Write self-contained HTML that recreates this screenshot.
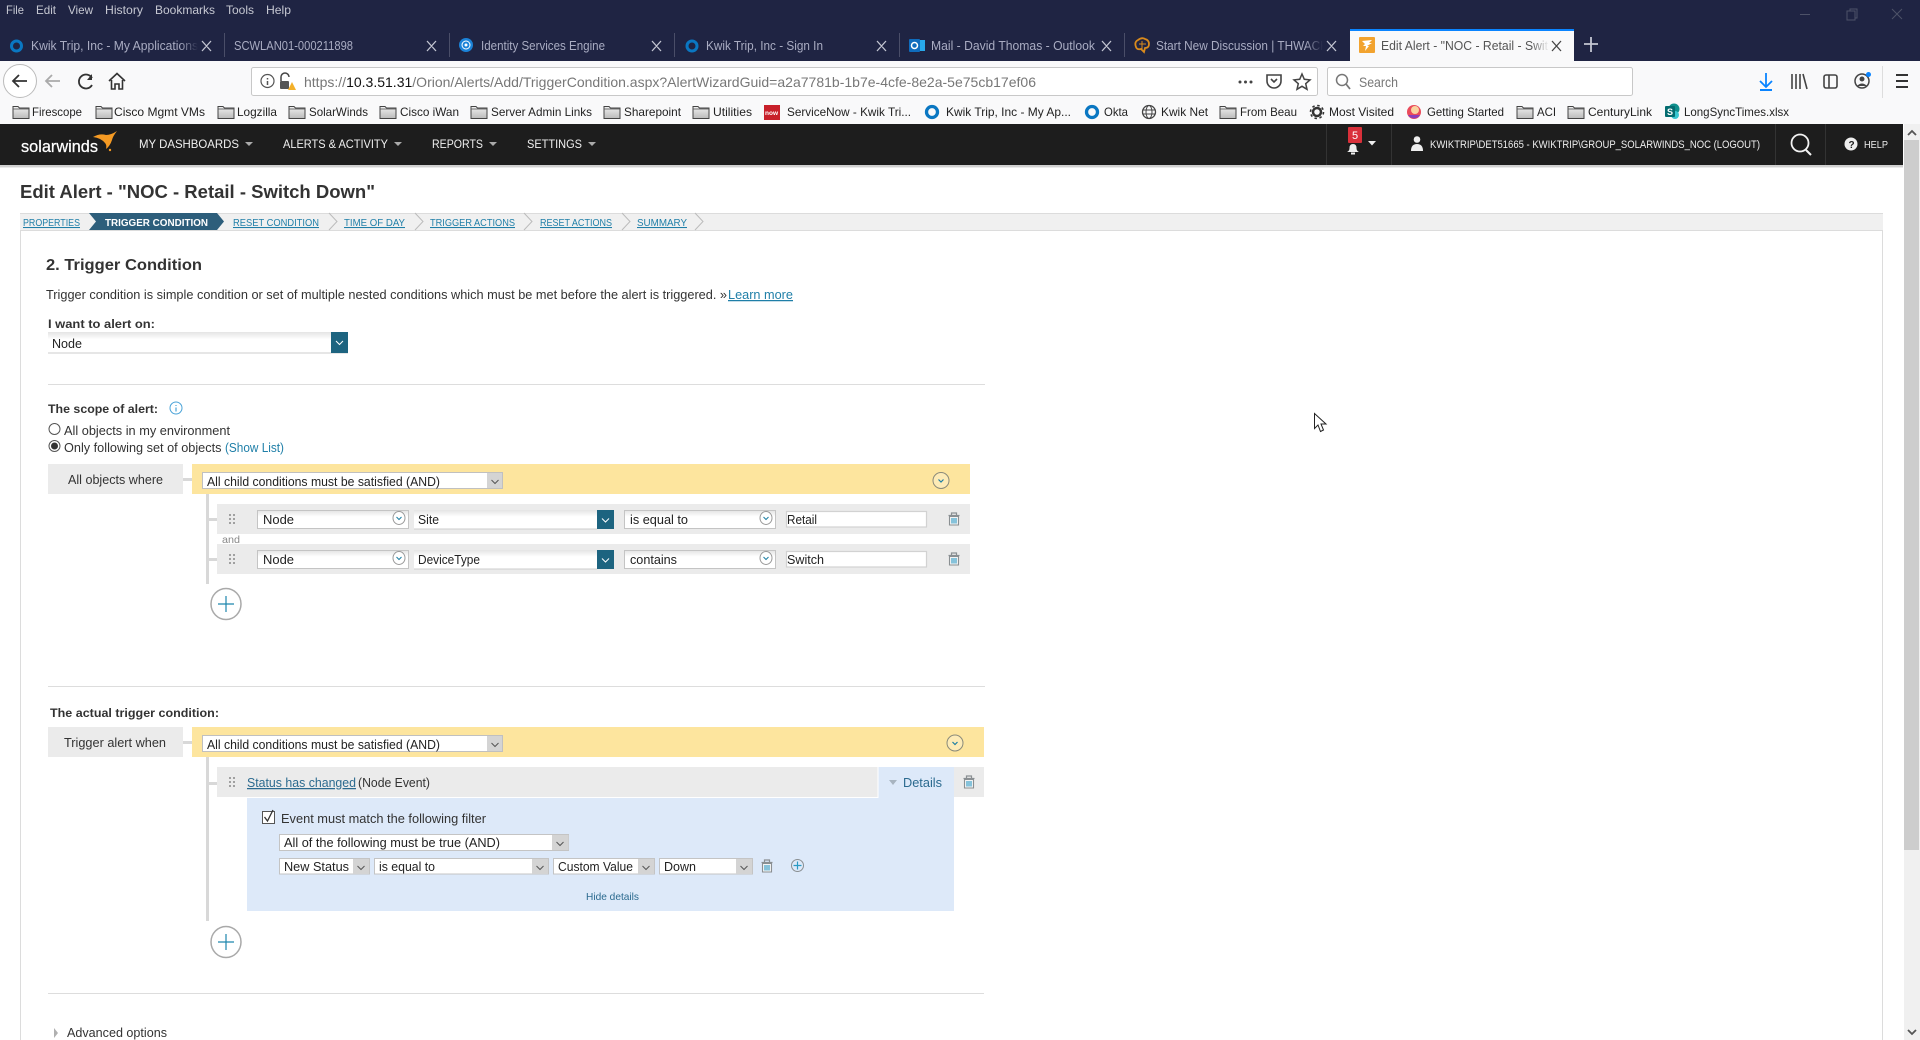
<!DOCTYPE html>
<html><head><meta charset="utf-8"><title>Edit Alert</title>
<style>
html,body{margin:0;padding:0;background:#fff;overflow:hidden;width:1920px;height:1040px}
svg{display:block}
text{font-family:"Liberation Sans",sans-serif;white-space:pre}
.m{font-size:12px;fill:#c6c8d2}
.t{font-size:12.5px;fill:#a9acc2}
.b{font-size:12px;fill:#222}
.n{font-size:12px;fill:#f0f0f0}
.d{font-size:12.5px;fill:#333}
.dk{font-size:12.5px;fill:#222}
.h{font-weight:bold;fill:#333}
.s{font-size:10.5px;fill:#1f7fa8;text-decoration:underline}
</style></head><body>
<svg width="1920" height="1040" viewBox="0 0 1920 1040" xmlns="http://www.w3.org/2000/svg">
<defs>
<linearGradient id="sel" x1="0" y1="0" x2="0" y2="1"><stop offset="0" stop-color="#e4e4e4"/><stop offset=".35" stop-color="#fff"/></linearGradient>
<linearGradient id="fold" x1="0" y1="0" x2="0" y2="1"><stop offset="0" stop-color="#f0f0f0"/><stop offset="1" stop-color="#bbb"/></linearGradient>
<linearGradient id="fd" x1="0" y1="0" x2="1" y2="0"><stop offset="0" stop-color="#1f2443" stop-opacity="0"/><stop offset="1" stop-color="#1f2443"/></linearGradient>
<linearGradient id="fl" x1="0" y1="0" x2="1" y2="0"><stop offset="0" stop-color="#f9f9fa" stop-opacity="0"/><stop offset="1" stop-color="#f9f9fa"/></linearGradient>
<g id="folder"><path d="M-8 -5.500 h5 l1.500 1.500 h9.500 v10.500 h-16 z" fill="url(#fold)" stroke="#444" stroke-width="1"/><path d="M-8 -3 h16" stroke="#555" stroke-width=".8"/></g>
<g id="trash" fill="none" stroke="#8a8f92" stroke-width="1.100"><path d="M-2.500 -4 v-2 h5 v2 M-5.500 -3.500 h11" stroke-width="1.200"/><path d="M-4.500 -2.500 h9 v8.500 h-9 z" fill="#f4f4f4"/><path d="M-2 -1 v5.500 M0 -1 v5.500 M2 -1 v5.500" stroke-width="1.100" stroke="#2b9ac4"/></g>
<g id="dots" fill="#a0a0a0"><rect x="-3" y="-5" width="2" height="2"/><rect x="1" y="-5" width="2" height="2"/><rect x="-3" y="-1" width="2" height="2"/><rect x="1" y="-1" width="2" height="2"/><rect x="-3" y="3" width="2" height="2"/><rect x="1" y="3" width="2" height="2"/></g>
<g id="circ"><circle r="8" cx="0" cy="0" fill="#fff" fill-opacity=".25" stroke="#8a8a7a" stroke-width="1"/><path d="M-2.500 -1 L0 1.500 L2.500 -1" fill="none" stroke="#1d7fa3" stroke-width="1.200"/></g>
<g id="addc"><ellipse rx="15" ry="15.500" fill="#fff" stroke="#a9a9a9" stroke-width="1.500"/><path d="M-8 0 H8 M0 -8 V8" stroke="#1d86ad" stroke-width="1.200"/></g>
<g id="okta"><circle r="5" fill="none" stroke="#0a77c2" stroke-width="3"/></g>
<path id="chv" d="M-3.500 -2 L0 1.500 L3.500 -2" fill="none" stroke="#555" stroke-width="1"/>
</defs>

<!-- window chrome -->
<rect width="1920" height="61" fill="#1f2443"/>
<text class="m" x="6" y="14" textLength="18" lengthAdjust="spacingAndGlyphs">File</text>
<text class="m" x="36" y="14" textLength="20" lengthAdjust="spacingAndGlyphs">Edit</text>
<text class="m" x="68" y="14" textLength="25" lengthAdjust="spacingAndGlyphs">View</text>
<text class="m" x="105" y="14" textLength="38" lengthAdjust="spacingAndGlyphs">History</text>
<text class="m" x="155" y="14" textLength="60" lengthAdjust="spacingAndGlyphs">Bookmarks</text>
<text class="m" x="226" y="14" textLength="28" lengthAdjust="spacingAndGlyphs">Tools</text>
<text class="m" x="266" y="14" textLength="25" lengthAdjust="spacingAndGlyphs">Help</text>
<g stroke="#4d5268" fill="none" stroke-width="1"><path d="M1800 14.500 h10"/><path d="M1847 11 h8 v9 h-8 z M1850 11 v-2 h7 v9 h-2"/><path d="M1892 9 l10 10 M1902 9 l-10 10"/></g>

<!-- tabs -->
<g stroke="#4a4e68" stroke-width="1"><path d="M224.500 33 V57 M449.500 33 V57 M674.500 33 V57 M899.500 33 V57 M1124.500 33 V57"/></g>
<use href="#okta" x="16.500" y="46"/>
<text class="t" x="31" y="50" textLength="167" lengthAdjust="spacingAndGlyphs">Kwik Trip, Inc - My Applications</text>
<rect x="180" y="38" width="18" height="18" fill="url(#fd)"/>
<text class="t" x="234" y="50" textLength="119" lengthAdjust="spacingAndGlyphs">SCWLAN01-000211898</text>
<circle cx="466" cy="45" r="7" fill="#1b82d8"/><circle cx="466" cy="45" r="4" fill="none" stroke="#fff" stroke-width="1"/><circle cx="466" cy="45" r="1.500" fill="#fff"/>
<text class="t" x="481" y="50" textLength="124" lengthAdjust="spacingAndGlyphs">Identity Services Engine</text>
<use href="#okta" x="692" y="46"/>
<text class="t" x="706" y="50" textLength="117" lengthAdjust="spacingAndGlyphs">Kwik Trip, Inc - Sign In</text>
<path d="M914 40 H925 V51 H914 z" fill="#28a8ea"/><rect x="909" y="39" width="11" height="13" rx="1" fill="#0f6cbd"/><circle cx="914.500" cy="45.500" r="3" fill="none" stroke="#fff" stroke-width="1.500"/>
<text class="t" x="931" y="50" textLength="164" lengthAdjust="spacingAndGlyphs">Mail - David Thomas - Outlook</text>
<path d="M1136 47 q-2 -5 2 -7 q4 -3 7 -1 q4 1 4 5 q0 4 -4 4 l-1 4 l-3 -3 q-4 1 -5 -2 z" fill="none" stroke="#d98a1c" stroke-width="1.800"/><path d="M1139 44 h7 M1142 41 v8" stroke="#d98a1c"/>
<text class="t" x="1156" y="50" textLength="172" lengthAdjust="spacingAndGlyphs">Start New Discussion | THWACK</text>
<rect x="1305" y="38" width="18" height="18" fill="url(#fd)"/><rect x="1323" y="38" width="7" height="18" fill="#1f2443"/>
<rect x="1350" y="29" width="224" height="32" fill="#f9f9fa"/><rect x="1350" y="29" width="224" height="2" fill="#0a84ff"/>
<rect x="1359" y="37" width="16" height="16" rx="1" fill="#f2a32f"/><path d="M1362 41 l10 -1 l-3 3 l3 0 l-5 3 l2 0 l-4 5 l1 -5 l-3 0 l2 -2 z" fill="#fff"/>
<text x="1381" y="50" font-size="12.500" fill="#555" textLength="167" lengthAdjust="spacingAndGlyphs">Edit Alert - "NOC - Retail - Swit</text>
<rect x="1532" y="38" width="17" height="18" fill="url(#fl)"/>
<g stroke="#c4c6d2" stroke-width="1.300" fill="none">
<path d="M202 41 l9 10 M211 41 l-9 10 M427 41 l9 10 M436 41 l-9 10 M652 41 l9 10 M661 41 l-9 10 M877 41 l9 10 M886 41 l-9 10 M1102 41 l9 10 M1111 41 l-9 10 M1327 41 l9 10 M1336 41 l-9 10"/>
<path d="M1584 44 h14 M1591 37 v15" stroke-width="1.800"/></g>
<path d="M1552 41 l9 10 M1561 41 l-9 10" stroke="#444" stroke-width="1.300"/>

<!-- toolbar -->
<rect y="61" width="1920" height="63" fill="#f9f9fa"/>
<circle cx="20" cy="81" r="16.500" fill="#fff" stroke="#bbb"/>
<path d="M27 81 H13 M19 75 L13 81 L19 87" fill="none" stroke="#333" stroke-width="1.800"/>
<path d="M60 81 H46 M52 75 L46 81 L52 87" fill="none" stroke="#aaa" stroke-width="1.800"/>
<path d="M92 78 A7 7 0 1 0 92 85" fill="none" stroke="#333" stroke-width="1.800"/><path d="M92 74 V80 H87 z" fill="#333"/>
<path d="M109 81 L117 73.500 L125 81 M111.500 80 V89 H115 V84 H119 V89 H122.500 V80" fill="none" stroke="#333" stroke-width="1.600"/>
<rect x="251.500" y="67.500" width="1066" height="28" rx="2" fill="#fff" stroke="#c8c8c8"/>
<circle cx="267.500" cy="81" r="6.500" fill="none" stroke="#555" stroke-width="1.200"/><path d="M267.500 78 v1.500 M267.500 81 v4" stroke="#555" stroke-width="1.500"/>
<path d="M281 81 v-4 a4 4 0 0 1 8 0" fill="none" stroke="#444" stroke-width="1.500"/><rect x="280" y="81" width="9" height="8" rx="1" fill="#555"/><path d="M288 90 L292 82 L296 90 z" fill="#f3b02a"/>
<text x="304" y="87" font-size="14" fill="#777" textLength="732" lengthAdjust="spacingAndGlyphs">https://<tspan fill="#111">10.3.51.31</tspan>/Orion/Alerts/Add/TriggerCondition.aspx?AlertWizardGuid=a2a7781b-1b7e-4cfe-8e2a-5e75cb17ef06</text>
<g fill="#444"><circle cx="1240" cy="82" r="1.500"/><circle cx="1245.500" cy="82" r="1.500"/><circle cx="1251" cy="82" r="1.500"/></g>
<path d="M1267 75 h14 v6 a7 7 0 0 1 -14 0 z" fill="none" stroke="#444" stroke-width="1.600"/><path d="M1271 79 l3 3 l3 -3" fill="none" stroke="#444" stroke-width="1.600"/>
<path d="M1302 74 l2.300 5.300 l5.700 .6 l-4.300 3.800 l1.300 5.600 l-5 -3 l-5 3 l1.300 -5.600 l-4.300 -3.800 l5.700 -.6 z" fill="none" stroke="#444" stroke-width="1.500"/>
<rect x="1327.500" y="67.500" width="305" height="28" rx="2" fill="#fff" stroke="#c8c8c8"/>
<circle cx="1342" cy="80" r="5.500" fill="none" stroke="#777" stroke-width="1.500"/><path d="M1346 84 L1350 89" stroke="#777" stroke-width="1.800"/>
<text x="1359" y="87" font-size="14" fill="#777" textLength="39" lengthAdjust="spacingAndGlyphs">Search</text>
<path d="M1766 73 V86 M1760 81 L1766 87 L1772 81" fill="none" stroke="#0a84ff" stroke-width="1.800"/><path d="M1760 90 H1772" stroke="#0a84ff" stroke-width="2"/>
<path d="M1792 74 V89 M1796 74 V89 M1800 74 V89 M1803 74 L1807 89" fill="none" stroke="#444" stroke-width="1.600"/>
<rect x="1824" y="75" width="13" height="13" rx="2" fill="none" stroke="#444" stroke-width="1.600"/><path d="M1829 75 V88" stroke="#444" stroke-width="1.600"/>
<circle cx="1862" cy="81" r="7" fill="none" stroke="#444" stroke-width="1.500"/><circle cx="1862" cy="79" r="2.500" fill="#444"/><path d="M1857 86 q5 -5 10 0" fill="#444"/><circle cx="1868.500" cy="74.500" r="2.500" fill="#0a84ff"/>
<path d="M1882.500 66 V98" stroke="#ddd"/>
<path d="M1896 75 H1908 M1896 81 H1908 M1896 87 H1908" stroke="#333" stroke-width="2"/>

<!-- bookmarks -->
<use href="#folder" x="21" y="112"/><text class="b" x="32" y="116" textLength="50" lengthAdjust="spacingAndGlyphs">Firescope</text>
<use href="#folder" x="104" y="112"/><text class="b" x="114" y="116" textLength="91" lengthAdjust="spacingAndGlyphs">Cisco Mgmt VMs</text>
<use href="#folder" x="226" y="112"/><text class="b" x="237" y="116" textLength="40" lengthAdjust="spacingAndGlyphs">Logzilla</text>
<use href="#folder" x="297" y="112"/><text class="b" x="309" y="116" textLength="59" lengthAdjust="spacingAndGlyphs">SolarWinds</text>
<use href="#folder" x="388" y="112"/><text class="b" x="400" y="116" textLength="59" lengthAdjust="spacingAndGlyphs">Cisco iWan</text>
<use href="#folder" x="479" y="112"/><text class="b" x="491" y="116" textLength="101" lengthAdjust="spacingAndGlyphs">Server Admin Links</text>
<use href="#folder" x="612" y="112"/><text class="b" x="624" y="116" textLength="57" lengthAdjust="spacingAndGlyphs">Sharepoint</text>
<use href="#folder" x="701" y="112"/><text class="b" x="713" y="116" textLength="39" lengthAdjust="spacingAndGlyphs">Utilities</text>
<rect x="764" y="105" width="16" height="15" fill="#c8202a"/><text x="765" y="115" font-size="6.500" font-weight="bold" fill="#fff">now</text>
<text class="b" x="787" y="116" textLength="124" lengthAdjust="spacingAndGlyphs">ServiceNow - Kwik Tri...</text>
<use href="#okta" transform="translate(932,112) scale(1.1)"/><text class="b" x="946" y="116" textLength="125" lengthAdjust="spacingAndGlyphs">Kwik Trip, Inc - My Ap...</text>
<use href="#okta" transform="translate(1092,112) scale(1.1)"/><text class="b" x="1104" y="116" textLength="24" lengthAdjust="spacingAndGlyphs">Okta</text>
<circle cx="1149" cy="112" r="6.500" fill="none" stroke="#444" stroke-width="1.300"/><ellipse cx="1149" cy="112" rx="3" ry="6.500" fill="none" stroke="#444"/><path d="M1143 110 h12 M1143 114 h12" stroke="#444"/>
<text class="b" x="1161" y="116" textLength="47" lengthAdjust="spacingAndGlyphs">Kwik Net</text>
<use href="#folder" x="1228" y="112"/><text class="b" x="1240" y="116" textLength="57" lengthAdjust="spacingAndGlyphs">From Beau</text>
<circle cx="1317" cy="112" r="4" fill="none" stroke="#333" stroke-width="2.500"/><circle cx="1317" cy="112" r="6.500" fill="none" stroke="#333" stroke-width="1.600" stroke-dasharray="2.500 2.600"/>
<text class="b" x="1329" y="116" textLength="65" lengthAdjust="spacingAndGlyphs">Most Visited</text>
<circle cx="1414" cy="112" r="7" fill="#ea4a5a"/><circle cx="1415" cy="110" r="4" fill="#f9d3a0"/><path d="M1408 115 a7 7 0 0 0 12 0" fill="#8a3dbb"/>
<text class="b" x="1427" y="116" textLength="77" lengthAdjust="spacingAndGlyphs">Getting Started</text>
<use href="#folder" x="1525" y="112"/><text class="b" x="1537" y="116" textLength="19" lengthAdjust="spacingAndGlyphs">ACI</text>
<use href="#folder" x="1576" y="112"/><text class="b" x="1588" y="116" textLength="64" lengthAdjust="spacingAndGlyphs">CenturyLink</text>
<circle cx="1674" cy="109" r="5.500" fill="#0f8f8c"/><circle cx="1675" cy="115" r="4" fill="#37c6d0"/><rect x="1665" y="106" width="10" height="11" rx="1" fill="#036c70"/><text x="1667" y="115" font-size="9" font-weight="bold" fill="#fff">S</text>
<text class="b" x="1684" y="116" textLength="105" lengthAdjust="spacingAndGlyphs">LongSyncTimes.xlsx</text>

<!-- page -->
<rect x="0" y="124" width="1904" height="916" fill="#fff"/>
<!-- scrollbar -->
<rect x="1904" y="124" width="16" height="916" fill="#f0f0f0"/><rect x="1904" y="140" width="15" height="710" fill="#cdcdcd"/>
<path d="M1908 135 l4 -4 l4 4" fill="none" stroke="#555" stroke-width="1.800"/><path d="M1908 1030 l4 4 l4 -4" fill="none" stroke="#555" stroke-width="1.800"/>

<!-- nav -->
<rect y="156" width="1903" height="12" fill="#888" opacity=".18"/>
<rect y="165" width="1903" height="2" fill="#aaa" opacity=".4"/>
<rect y="124" width="1903" height="41" fill="#1d1d1d"/>
<text x="21" y="152" font-size="17" fill="#fff" stroke="#fff" stroke-width=".25" textLength="77" lengthAdjust="spacingAndGlyphs">solarwinds</text>
<path d="M117 131 Q113 136 112 140 Q110 146 106 149 Q107 145 105 143 Q101 138 93 137 Q100 133 106 135 Q111 135 117 131 z" fill="#f59a23"/><circle cx="110" cy="150" r="1.200" fill="#f59a23"/>
<text class="n" x="139" y="148" textLength="100" lengthAdjust="spacingAndGlyphs">MY DASHBOARDS</text><path d="M245 142 h8 l-4 4 z" fill="#aaa"/>
<text class="n" x="283" y="148" textLength="105" lengthAdjust="spacingAndGlyphs">ALERTS &amp; ACTIVITY</text><path d="M394 142 h8 l-4 4 z" fill="#aaa"/>
<text class="n" x="432" y="148" textLength="51" lengthAdjust="spacingAndGlyphs">REPORTS</text><path d="M489 142 h8 l-4 4 z" fill="#aaa"/>
<text class="n" x="527" y="148" textLength="55" lengthAdjust="spacingAndGlyphs">SETTINGS</text><path d="M588 142 h8 l-4 4 z" fill="#aaa"/>
<path d="M1326.500 124 V165 M1391.500 124 V165 M1775.500 124 V165 M1825.500 124 V165" stroke="#333"/>
<path d="M1347 152 q2.500 -1 2.500 -4 q0 -4 3.500 -4 q3.500 0 3.500 4 q0 3 2.500 4 z" fill="#eee"/><rect x="1351" y="152.500" width="4" height="2" fill="#eee"/>
<rect x="1348" y="127" width="14" height="16" rx="1" fill="#d9303a"/><text x="1352" y="139" font-size="11" fill="#fff">5</text>
<path d="M1368 141 h8 l-4 4.500 z" fill="#eee"/>
<circle cx="1417" cy="139.500" r="3.300" fill="#eee"/><path d="M1411 151 q0 -7 6 -7 q6 0 6 7 z" fill="#eee"/>
<text x="1430" y="148" font-size="11" fill="#eee" textLength="330" lengthAdjust="spacingAndGlyphs">KWIKTRIP\DET51665 - KWIKTRIP\GROUP_SOLARWINDS_NOC (LOGOUT)</text>
<circle cx="1800" cy="143" r="8.500" fill="none" stroke="#f2f2f2" stroke-width="1.800"/><path d="M1806 150 L1811 155" stroke="#f2f2f2" stroke-width="2"/>
<circle cx="1851" cy="144" r="6.500" fill="#eee"/><text x="1848.500" y="148" font-size="10" font-weight="bold" fill="#1d1d1d">?</text>
<text x="1864" y="148" font-size="10.500" fill="#eee" textLength="24" lengthAdjust="spacingAndGlyphs">HELP</text>

<!-- title -->
<text class="h" x="20" y="198" font-size="18" textLength="355" lengthAdjust="spacingAndGlyphs">Edit Alert - "NOC - Retail - Switch Down"</text>

<!-- breadcrumbs -->
<path d="M20.500 230 V1040 M1882.500 230 V1040" stroke="#dcdcdc"/>
<rect x="20" y="213" width="1863" height="17.500" fill="#f0f0f0"/>
<path d="M20 213.500 H1883 M20 230.500 H1883" stroke="#dcdcdc"/>
<text class="s" x="23" y="226" textLength="57" lengthAdjust="spacingAndGlyphs">PROPERTIES</text>
<path d="M89 213 H217 L224 221.500 L217 230 H89 L96 221.500 z" fill="#2d5e7b"/>
<text x="105" y="226" font-size="10.500" font-weight="bold" fill="#fff" textLength="103" lengthAdjust="spacingAndGlyphs">TRIGGER CONDITION</text>
<text class="s" x="233" y="226" textLength="86" lengthAdjust="spacingAndGlyphs">RESET CONDITION</text>
<text class="s" x="344" y="226" textLength="61" lengthAdjust="spacingAndGlyphs">TIME OF DAY</text>
<text class="s" x="430" y="226" textLength="85" lengthAdjust="spacingAndGlyphs">TRIGGER ACTIONS</text>
<text class="s" x="540" y="226" textLength="72" lengthAdjust="spacingAndGlyphs">RESET ACTIONS</text>
<text class="s" x="637" y="226" textLength="50" lengthAdjust="spacingAndGlyphs">SUMMARY</text>
<path d="M329 213 L337 221.500 L329 230 M415 213 L423 221.500 L415 230 M524 213 L532 221.500 L524 230 M622 213 L630 221.500 L622 230 M695 213 L703 221.500 L695 230" fill="none" stroke="#bbb"/>

<!-- heading -->
<text class="h" x="46" y="270" font-size="16" textLength="156" lengthAdjust="spacingAndGlyphs">2. Trigger Condition</text>
<text class="d" x="46" y="299" textLength="681" lengthAdjust="spacingAndGlyphs">Trigger condition is simple condition or set of multiple nested conditions which must be met before the alert is triggered. »</text>
<text x="728" y="299" font-size="12.500" fill="#1f7fa8" text-decoration="underline" textLength="65" lengthAdjust="spacingAndGlyphs">Learn more</text>
<text class="h" x="48" y="328" font-size="12" textLength="107" lengthAdjust="spacingAndGlyphs">I want to alert on:</text>
<rect x="48" y="332" width="283" height="21" fill="url(#sel)"/><path d="M48 353 H348" stroke="#ccc"/>
<rect x="331" y="332" width="17" height="21" fill="#1d6480"/><path d="M336 341 L339.500 344.500 L343 341" fill="none" stroke="#fff"/>
<text class="dk" x="52" y="348" textLength="30" lengthAdjust="spacingAndGlyphs">Node</text>

<path d="M48 384.500 H985" stroke="#ddd"/>

<!-- scope -->
<text class="h" x="48" y="413" font-size="12" textLength="110" lengthAdjust="spacingAndGlyphs">The scope of alert:</text>
<circle cx="176" cy="408" r="6" fill="#fff" stroke="#4aa3d8"/><path d="M176 405 v1 M176 407.500 v4" stroke="#4aa3d8" stroke-width="1.200"/>
<circle cx="54.500" cy="429" r="5.500" fill="#fff" stroke="#555"/>
<text class="d" x="64" y="435" textLength="166" lengthAdjust="spacingAndGlyphs">All objects in my environment</text>
<circle cx="54.500" cy="446" r="5.500" fill="#fff" stroke="#555"/><circle cx="54.500" cy="446" r="3.500" fill="#333"/>
<text class="d" x="64" y="452" textLength="161" lengthAdjust="spacingAndGlyphs">Only following set of objects </text>
<text x="225" y="452" font-size="12.500" fill="#1f7fa8" textLength="59" lengthAdjust="spacingAndGlyphs">(Show List)</text>

<rect x="48" y="464" width="135" height="30" fill="#ebebeb"/>
<text class="d" x="68" y="484" textLength="95" lengthAdjust="spacingAndGlyphs">All objects where</text>
<rect x="183" y="478" width="9" height="3" fill="#d8d8d8"/>
<rect x="192" y="464" width="778" height="30" fill="#fde59e"/>
<rect x="202" y="472" width="301" height="17" fill="#fff"/><rect x="487" y="472" width="16" height="17" fill="#d4d4d4"/><rect x="202.500" y="472.500" width="300" height="16" fill="none" stroke="#c0c0c0"/>
<use href="#chv" x="495" y="482"/>
<text class="dk" x="207" y="486" textLength="233" lengthAdjust="spacingAndGlyphs">All child conditions must be satisfied (AND)</text>
<use href="#circ" x="941" y="480.500"/>
<rect x="206" y="494" width="3" height="90" fill="#d8d8d8"/>
<rect x="208" y="518" width="9" height="3" fill="#d8d8d8"/><rect x="208" y="558" width="9" height="3" fill="#d8d8d8"/>
<rect x="217" y="504" width="753" height="30" fill="#ebebeb"/>
<rect x="217" y="544" width="753" height="30" fill="#ebebeb"/>
<text x="222" y="543" font-size="10.500" fill="#888" textLength="18" lengthAdjust="spacingAndGlyphs">and</text>
<use href="#dots" x="232" y="519"/><use href="#dots" x="232" y="559"/>
<!-- row 1 -->
<rect x="257.500" y="510.500" width="151" height="18" fill="url(#sel)" stroke="#c4c4c4"/>
<text class="dk" x="263" y="524" textLength="31" lengthAdjust="spacingAndGlyphs">Node</text>
<ellipse cx="399" cy="518" rx="6" ry="6.500" fill="#fff" stroke="#999"/><path d="M396.500 517 L399 519.500 L401.500 517" fill="none" stroke="#1d7fa3"/>
<rect x="414" y="510" width="183" height="19" fill="url(#sel)"/><path d="M414 529 H597" stroke="#ccc"/>
<rect x="597" y="510" width="17" height="19" fill="#1d6480"/><path d="M602 518.500 L605.500 522 L609 518.500" fill="none" stroke="#fff"/>
<text class="dk" x="418" y="524" textLength="21" lengthAdjust="spacingAndGlyphs">Site</text>
<rect x="624.500" y="510.500" width="151" height="18" fill="url(#sel)" stroke="#c4c4c4"/>
<text class="dk" x="630" y="524" textLength="58" lengthAdjust="spacingAndGlyphs">is equal to</text>
<ellipse cx="766" cy="518" rx="6" ry="6.500" fill="#fff" stroke="#999"/><path d="M763.500 517 L766 519.500 L768.500 517" fill="none" stroke="#1d7fa3"/>
<rect x="786.500" y="511.500" width="140" height="15.500" fill="#fff" stroke="#d2d2d2" stroke-width="1.200"/>
<text class="dk" x="787" y="524" textLength="30" lengthAdjust="spacingAndGlyphs">Retail</text>
<use href="#trash" x="954" y="519"/>
<!-- row 2 -->
<rect x="257.500" y="550.500" width="151" height="18" fill="url(#sel)" stroke="#c4c4c4"/>
<text class="dk" x="263" y="564" textLength="31" lengthAdjust="spacingAndGlyphs">Node</text>
<ellipse cx="399" cy="558" rx="6" ry="6.500" fill="#fff" stroke="#999"/><path d="M396.500 557 L399 559.500 L401.500 557" fill="none" stroke="#1d7fa3"/>
<rect x="414" y="550" width="183" height="19" fill="url(#sel)"/><path d="M414 569 H597" stroke="#ccc"/>
<rect x="597" y="550" width="17" height="19" fill="#1d6480"/><path d="M602 558.500 L605.500 562 L609 558.500" fill="none" stroke="#fff"/>
<text class="dk" x="418" y="564" textLength="62" lengthAdjust="spacingAndGlyphs">DeviceType</text>
<rect x="624.500" y="550.500" width="151" height="18" fill="url(#sel)" stroke="#c4c4c4"/>
<text class="dk" x="630" y="564" textLength="47" lengthAdjust="spacingAndGlyphs">contains</text>
<ellipse cx="766" cy="558" rx="6" ry="6.500" fill="#fff" stroke="#999"/><path d="M763.500 557 L766 559.500 L768.500 557" fill="none" stroke="#1d7fa3"/>
<rect x="786.500" y="551.500" width="140" height="15.500" fill="#fff" stroke="#d2d2d2" stroke-width="1.200"/>
<text class="dk" x="787" y="564" textLength="37" lengthAdjust="spacingAndGlyphs">Switch</text>
<use href="#trash" x="954" y="559"/>
<use href="#addc" x="226" y="604"/>

<path d="M48 686.500 H985" stroke="#ddd"/>

<!-- trigger -->
<text class="h" x="50" y="717" font-size="12" textLength="169" lengthAdjust="spacingAndGlyphs">The actual trigger condition:</text>
<rect x="48" y="727" width="135" height="30" fill="#ebebeb"/>
<text class="d" x="64" y="747" textLength="102" lengthAdjust="spacingAndGlyphs">Trigger alert when</text>
<rect x="183" y="741" width="9" height="3" fill="#d8d8d8"/>
<rect x="192" y="727" width="792" height="30" fill="#fde59e"/>
<rect x="202" y="735" width="301" height="17" fill="#fff"/><rect x="487" y="735" width="16" height="17" fill="#d4d4d4"/><rect x="202.500" y="735.500" width="300" height="16" fill="none" stroke="#c0c0c0"/>
<use href="#chv" x="495" y="745"/>
<text class="dk" x="207" y="749" textLength="233" lengthAdjust="spacingAndGlyphs">All child conditions must be satisfied (AND)</text>
<use href="#circ" x="955" y="743"/>
<rect x="206" y="757" width="3" height="164" fill="#d8d8d8"/>
<rect x="208" y="782" width="9" height="3" fill="#d8d8d8"/>
<rect x="217" y="767" width="661" height="30" fill="#ebebeb"/>
<rect x="878" y="767" width="76" height="31" fill="#dde9f9"/>
<rect x="954" y="767" width="30" height="30" fill="#ebebeb"/>
<rect x="247" y="798" width="707" height="113" fill="#dde9f9"/>
<path d="M247 797.500 H878 M878 767 V798" stroke="#fff"/>
<use href="#dots" x="232" y="782"/>
<text x="247" y="787" font-size="12.500" fill="#2b6a8f" text-decoration="underline" textLength="109" lengthAdjust="spacingAndGlyphs">Status has changed</text>
<text class="d" x="358" y="787" textLength="72" lengthAdjust="spacingAndGlyphs">(Node Event)</text>
<path d="M889 780 h8 l-4 5 z" fill="#a8b4c0"/>
<text x="903" y="787" font-size="12.500" fill="#2b6a8f" textLength="39" lengthAdjust="spacingAndGlyphs">Details</text>
<use href="#trash" x="969" y="782"/>
<rect x="262.500" y="811.500" width="12" height="12" fill="#fff" stroke="#555"/><path d="M264.500 817 L267.500 821 L273 810" fill="none" stroke="#333" stroke-width="1.300"/>
<text class="d" x="281" y="823" textLength="205" lengthAdjust="spacingAndGlyphs">Event must match the following filter</text>
<rect x="279.500" y="834.500" width="289" height="16" fill="#fff" stroke="#c4c4c4"/><rect x="552" y="835" width="16.500" height="15" fill="#d4d4d4"/><use href="#chv" x="560" y="844"/>
<text class="dk" x="284" y="847" textLength="216" lengthAdjust="spacingAndGlyphs">All of the following must be true (AND)</text>
<rect x="279.500" y="858.500" width="90" height="15.500" fill="#fff" stroke="#c4c4c4"/><rect x="353" y="859" width="16" height="15" fill="#d4d4d4"/><use href="#chv" x="361" y="868"/>
<text class="dk" x="284" y="871" textLength="65" lengthAdjust="spacingAndGlyphs">New Status</text>
<rect x="374.500" y="858.500" width="174" height="15.500" fill="#fff" stroke="#c4c4c4"/><rect x="532" y="859" width="16" height="15" fill="#d4d4d4"/><use href="#chv" x="540" y="868"/>
<text class="dk" x="379" y="871" textLength="56" lengthAdjust="spacingAndGlyphs">is equal to</text>
<rect x="553.500" y="858.500" width="101" height="15.500" fill="#fff" stroke="#c4c4c4"/><rect x="638" y="859" width="16" height="15" fill="#d4d4d4"/><use href="#chv" x="646" y="868"/>
<text class="dk" x="558" y="871" textLength="75" lengthAdjust="spacingAndGlyphs">Custom Value</text>
<rect x="659.500" y="858.500" width="93" height="15.500" fill="#fff" stroke="#c4c4c4"/><rect x="736" y="859" width="16" height="15" fill="#d4d4d4"/><use href="#chv" x="744" y="868"/>
<text class="dk" x="664" y="871" textLength="32" lengthAdjust="spacingAndGlyphs">Down</text>
<use href="#trash" x="767" y="866"/>
<circle cx="797.500" cy="865.500" r="6" fill="none" stroke="#8a8f92"/><path d="M793.500 865.500 h8 M797.500 861.500 v8" stroke="#2b9ac4" stroke-width="1.200"/>
<text x="586" y="900" font-size="10.500" fill="#2b6a8f" textLength="53" lengthAdjust="spacingAndGlyphs">Hide details</text>
<use href="#addc" x="226" y="942"/>

<path d="M48 993.500 H984" stroke="#ddd"/>
<path d="M54 1028 l4 5 l-4 5 z" fill="#b0b0b0"/>
<text class="d" x="67" y="1037" textLength="100" lengthAdjust="spacingAndGlyphs">Advanced options</text>

<!-- cursor -->
<path d="M1314.500 413.500 V428.500 L1318 425 L1320.500 431.500 L1323.500 430 L1321 424 L1326 424 z" fill="#fff" stroke="#222" stroke-width="1"/>
</svg>
</body></html>
